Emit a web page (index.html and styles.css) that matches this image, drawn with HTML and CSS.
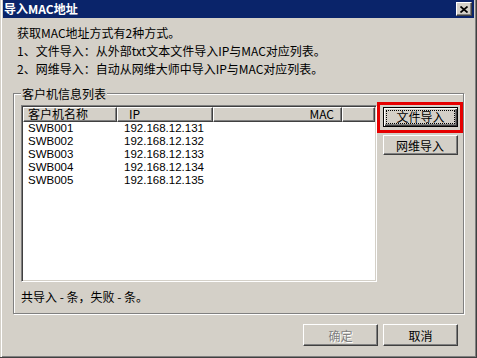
FILE: index.html
```html
<!DOCTYPE html>
<html lang="zh-CN">
<head>
    <meta charset="UTF-8">
    <meta name="viewport" content="width=device-width, initial-scale=1.0">
    <title>导入MAC地址</title>
    <link rel="stylesheet" href="styles.css">
</head>
<body>
    <div class="window">
        <div class="titlebar">
            <span class="title">导入MAC地址</span>
            <button class="close" title="关闭">
                <svg width="8" height="7" viewBox="0 0 8 7">
                    <path d="M0.5 0.5 L7.5 6.5 M7.5 0.5 L0.5 6.5" stroke="#000" stroke-width="1.7" fill="none"/>
                </svg>
            </button>
        </div>
        <div class="client">
            <div class="intro">
                <p>获取MAC地址方式有2种方式。</p>
                <p>1、文件导入：从外部txt文本文件导入IP与MAC对应列表。</p>
                <p>2、网维导入：自动从网维大师中导入IP与MAC对应列表。</p>
            </div>
            <div class="group">
                <div class="group-title">客户机信息列表</div>
                <div class="group-row">
                    <div class="list">
                        <div class="list-head">
                            <div class="head-cell col-name">客户机名称</div>
                            <div class="head-cell col-ip">IP</div>
                            <div class="head-cell col-mac">MAC</div>
                            <div class="head-cell col-rest"></div>
                        </div>
                        <div class="list-row"><span class="col-name">SWB001</span><span class="col-ip">192.168.12.131</span></div>
                        <div class="list-row"><span class="col-name">SWB002</span><span class="col-ip">192.168.12.132</span></div>
                        <div class="list-row"><span class="col-name">SWB003</span><span class="col-ip">192.168.12.133</span></div>
                        <div class="list-row"><span class="col-name">SWB004</span><span class="col-ip">192.168.12.134</span></div>
                        <div class="list-row"><span class="col-name">SWB005</span><span class="col-ip">192.168.12.135</span></div>
                    </div>
                    <div class="side">
                        <div class="highlight">
                            <button class="btn btn-default"><span class="focus">文件导入</span></button>
                        </div>
                        <button class="btn btn-side">网维导入</button>
                    </div>
                </div>
                <div class="status">共导入 - 条，失败 - 条。</div>
            </div>
            <div class="footer">
                <button class="btn" disabled>确定</button>
                <button class="btn">取消</button>
            </div>
        </div>
    </div>
</body>
</html>
```

FILE: styles.css
```css
body {
    margin: 0;
    padding: 0;
    background-color: #d4d0c8;
    font-family: "Noto Sans CJK SC", "Liberation Sans", sans-serif;
    font-size: 12px;
    color: #000;
}
.window {
    width: 477px;
    height: 358px;
    box-sizing: border-box;
    overflow: hidden;
    background-color: #d4d0c8;
    border-right: 1px solid #404040;
    border-bottom: 1px solid #404040;
    padding: 0 2px 2px 3px;
    box-shadow: inset 1px 0 0 #d4d0c8, inset 2px 0 0 #fff, inset -1px -1px 0 #808080;
}
.titlebar {
    height: 18px;
    background-color: #0a246a;
    display: flex;
    align-items: center;
    justify-content: space-between;
    padding: 0 2px 0 1px;
}
.title {
    color: #fff;
    font-weight: bold;
    font-size: 12px;
    line-height: 18px;
}
.close {
    width: 16px;
    height: 14px;
    padding: 0;
    margin: 0;
    background-color: #d4d0c8;
    border: 1px solid;
    border-color: #fff #404040 #404040 #fff;
    box-shadow: inset -1px -1px 0 #808080;
    display: flex;
    align-items: center;
    justify-content: center;
}
.intro {
    margin-top: 6px;
    padding-left: 14px;
}
.intro p {
    margin: 0;
    line-height: 18px;
}
.group {
    margin: 15px 10px 0 10px;
    border: 1px solid #808080;
    box-shadow: 1px 1px 0 #fff, inset 1px 1px 0 #fff;
    padding: 0 0 9px 7px;
}
.group-title {
    width: max-content;
    margin: -7px 0 0 0;
    padding: 0 1px;
    line-height: 14px;
    background-color: #d4d0c8;
}
.group-row {
    display: flex;
    align-items: flex-start;
    margin-top: 1px;
}
.list {
    width: 356px;
    height: 177px;
    box-sizing: border-box;
    margin-top: 3px;
    background-color: #fff;
    border: 1px solid;
    border-color: #808080 #fff #fff #808080;
    box-shadow: inset 1px 1px 0 #404040, inset -1px -1px 0 #d4d0c8;
    padding: 1px;
}
.list-head {
    display: flex;
    height: 15px;
}
.head-cell {
    box-sizing: border-box;
    height: 15px;
    line-height: 12px;
    background-color: #d4d0c8;
    border: 1px solid;
    border-color: #fff #404040 #404040 #fff;
    box-shadow: inset -1px -1px 0 #808080;
    white-space: nowrap;
}
.list-head .col-name {
    width: 94px;
    padding-left: 4px;
}
.list-head .col-ip {
    width: 96px;
    padding-left: 11px;
}
.list-head .col-mac {
    width: 129px;
    text-align: right;
    padding-right: 7px;
}
.list-head .col-rest {
    flex: 1;
}
.list-row {
    display: flex;
    height: 13px;
    line-height: 13px;
    font-family: "Liberation Sans", sans-serif;
    font-size: 11.5px;
    white-space: nowrap;
}
.list-row .col-name {
    width: 94px;
    box-sizing: border-box;
    padding-left: 5px;
}
.list-row .col-ip {
    padding-left: 7px;
}
.side {
    width: 86px;
    display: flex;
    flex-direction: column;
    align-items: center;
}
.highlight {
    width: 86px;
    box-sizing: border-box;
    border: 3px solid #e60000;
    padding: 2px 3px 3px 3px;
}
.btn {
    width: 75px;
    height: 22px;
    box-sizing: border-box;
    padding: 0;
    margin: 0;
    font-family: "Noto Sans CJK SC", "Liberation Sans", sans-serif;
    font-size: 12px;
    color: #000;
    background-color: #d4d0c8;
    border: 1px solid;
    border-color: #fff #404040 #404040 #fff;
    box-shadow: inset -1px -1px 0 #808080;
}
.btn-default {
    height: 20px;
    display: flex;
    align-items: center;
    justify-content: center;
    border: 1px solid #000;
    box-shadow: inset 1px 1px 0 #fff, inset -1px -1px 0 #404040, inset -2px -2px 0 #808080;
    padding: 2px;
}
.focus {
    flex: 1;
    align-self: stretch;
    border: 1px dotted #000;
    line-height: 12px;
    text-align: center;
}
.btn-side {
    height: 20px;
    margin-top: 2px;
}
.btn[disabled] {
    color: #808080;
    text-shadow: 1px 1px 0 #fff;
}
.status {
    margin-top: 8px;
    line-height: 14px;
}
.footer {
    display: flex;
    justify-content: flex-end;
    gap: 5px;
    margin-top: 10px;
    padding-right: 16px;
}
```
